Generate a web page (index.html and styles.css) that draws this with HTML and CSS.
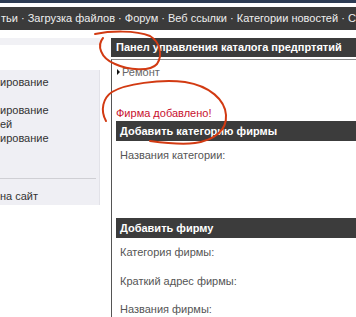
FILE: index.html
```html
<!DOCTYPE html>
<html lang="ru">
<head>
  <meta charset="UTF-8">
  <title>Панел управления каталога предпртятий</title>
  <link rel="stylesheet" href="styles.css">
</head>
<body>
  <div class="topline"></div>
  <div class="nav">тьи · Загрузка файлов · Форум · Веб ссылки · Категории новостей · Статьи</div>

  <div class="page">
    <div class="side">
      <div class="side-band"></div>
      <div class="side-panel">
        <ul class="side-list">
          <li>ирование</li>
          <li>&nbsp;</li>
          <li>ирование</li>
          <li>ей</li>
          <li>ирование</li>
        </ul>
        <div class="side-sep"></div>
        <div class="side-link">на сайт</div>
      </div>
    </div>

    <div class="main">
      <div class="panel-title">Панел управления каталога предпртятий</div>
      <div class="box">
        <div class="cat"><span class="arrow"></span>Ремонт</div>
        <div class="notice">Фирма добавлено!</div>

        <div class="bar">Добавить категорию фирмы</div>
        <div class="field first">Названия категории:</div>

        <div class="bar bar-firm">Добавить фирму</div>
        <div class="field first">Категория фирмы:</div>
        <div class="field">Краткий адрес фирмы:</div>
        <div class="field last">Названия фирмы:</div>
      </div>
    </div>
  </div>

  <!-- hand drawn marks over the screenshot -->
  <svg class="marks" width="356" height="317" viewBox="0 0 356 317">
    <path d="M103,38 C97,45 100,58 115,64 C128,70 150,72 157,64 C163,55 160,42 150,36 C135,30 110,31 95,34" />
    <path d="M106,121 C100,110 103,98 112,92 C125,84 160,79 185,82 C210,86 225,100 226,115 C227,130 215,140 195,143 C180,145 165,143 150,141" />
  </svg>
</body>
</html>
```

FILE: styles.css
```css
/* page */
body {
  margin: 0;
  padding: 0;
  width: 356px;
  height: 317px;
  overflow: hidden;
  position: relative;
  font-family: 'Liberation Sans', Arial, sans-serif;
  background-color: #fff;
  color: #555;
}

.topline {
  height: 3px;
  background-color: #2d3c54;
  margin-bottom: 4px;
}

.nav {
  height: 23px;
  line-height: 23px;
  background-color: #3b3b3b;
  color: #eee;
  font-size: 11px;
  white-space: nowrap;
  overflow: hidden;
  padding-left: 1px;
}

.page {
  display: flex;
  margin-top: 8px;
}

/* left column */
.side {
  width: 100px;
  flex-shrink: 0;
}

.side-band {
  height: 7px;
  background-color: #f1f1f5;
}

.side-panel {
  margin-top: 25px;
  height: 135px;
  background-color: #efeff4;
  border-right: 1px solid #e2e2e8;
  box-sizing: border-box;
  padding-top: 5px;
}

.side-list {
  list-style: none;
  margin: 0;
  padding: 0;
  font-size: 11px;
  line-height: 14px;
  color: #333;
}

.side-sep {
  margin-top: 33px;
  height: 1px;
  background-color: #cfcfd4;
  margin-right: 3px;
}

.side-link {
  margin-top: 10px;
  font-size: 11px;
  line-height: 14px;
  color: #333;
}

/* main column */
.main {
  flex: 1;
  margin-left: 11px;
}

.panel-title {
  height: 19px;
  line-height: 19px;
  background-color: #3c3c3c;
  color: #fff;
  font-size: 11px;
  font-weight: bold;
  padding-left: 5px;
  white-space: nowrap;
}

.box {
  margin-top: 2px;
  border-top: 1px solid #8c8c8c;
  border-left: 1px solid #555;
  padding-left: 4px;
  height: 257px;
  overflow: hidden;
}

.cat {
  margin-top: 6px;
  font-size: 11px;
  line-height: 13px;
  color: #666;
}

.arrow {
  display: inline-block;
  width: 0;
  height: 0;
  border-top: 3px solid transparent;
  border-bottom: 3px solid transparent;
  border-left: 3px solid #111;
  margin: 0 2px 0 1px;
  vertical-align: 1px;
}

.notice {
  margin-top: 28px;
  font-size: 11px;
  line-height: 13px;
  color: #c8102e;
}

.bar {
  margin-top: 1px;
  height: 20px;
  line-height: 20px;
  background-color: #3c3c3c;
  color: #fff;
  font-size: 11px;
  font-weight: bold;
  padding-left: 4px;
  white-space: nowrap;
}

.bar-firm {
  margin-top: 56px;
}

.field {
  font-size: 11px;
  line-height: 13px;
  color: #555;
  padding-left: 4px;
  margin-top: 16px;
}

.field.first {
  margin-top: 8px;
}

.field.last {
  margin-top: 15px;
}

.marks {
  position: absolute;
  left: 0;
  top: 0;
  pointer-events: none;
  fill: none;
  stroke: #d23a12;
  stroke-width: 2;
  stroke-linecap: round;
}
```
